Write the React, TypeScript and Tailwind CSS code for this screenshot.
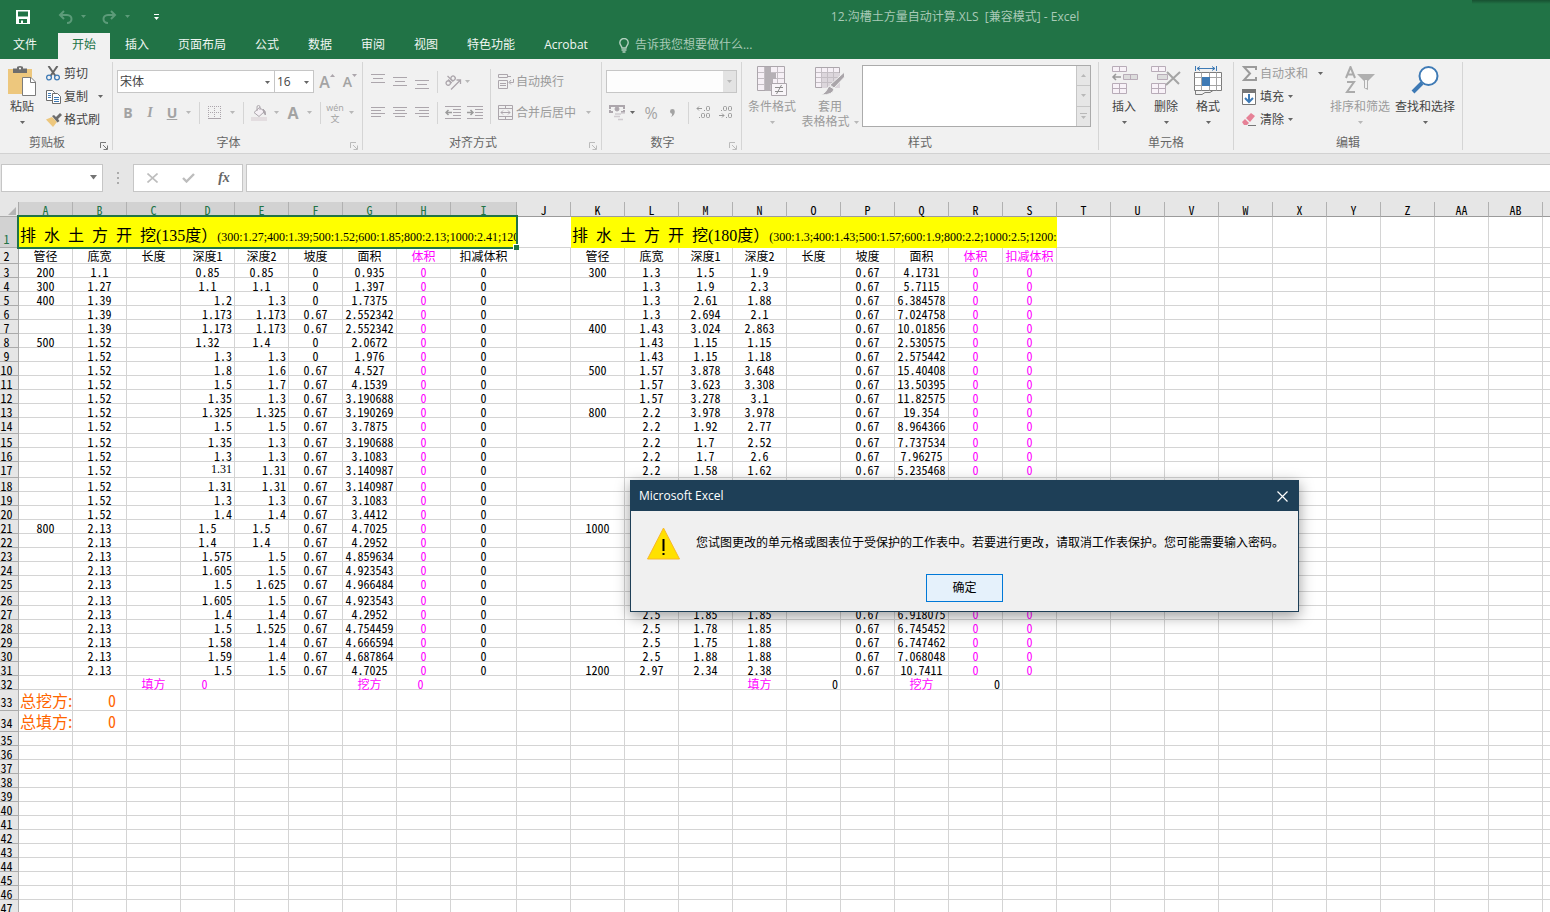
import React from 'react';

const INK = '#aca6ac';
const DARK = '#737373';
const BLUE = '#3e7ab5';

const Arrow: React.FC<{ color?: string; className?: string }> = ({ color = '#666666', className = '' }) => (
  <svg width="5" height="3" viewBox="0 0 5 3" className={`shrink-0 ${className}`}>
    <path d="M0 0h5L2.500 3z" fill={color} />
  </svg>
);

const Launcher: React.FC<{ color?: string }> = ({ color = '#777777' }) => (
  <svg width="8" height="8" viewBox="0 0 8 8" className="absolute right-1 bottom-0" fill="none" stroke={color}>
    <path d="M.5 6V.5H6M3 3l4 4M7.500 3.500v4h-4" />
  </svg>
);

const Divider = () => <span className="h-[22px] w-px shrink-0 bg-[#d5d5d5]" />;

const Group: React.FC<{
  label: string;
  width: string;
  launcher?: string;
  children: React.ReactNode;
}> = ({ label, width, launcher, children }) => (
  <section aria-label={label} className={`relative flex h-[88px] shrink-0 flex-col border-r border-[#d5d5d5] ${width}`}>
    <div className="flex h-[72px] shrink-0 items-start">{children}</div>
    <div className={`text-center leading-[18px] text-[#666666] ${launcher ? 'pr-[18px]' : ''}`}>{label}</div>
    {launcher && <Launcher color={launcher} />}
  </section>
);

const LargeButton: React.FC<{
  icon: React.ReactNode;
  label: string;
  second?: string;
  width: string;
  disabled?: boolean;
}> = ({ icon, label, second, width, disabled }) => (
  <button className={`flex shrink-0 flex-col items-center pt-1 leading-4 whitespace-nowrap ${width} ${disabled ? 'text-[#9b9b9b]' : 'text-[#444444]'}`}>
    <span className="flex h-[33px] items-start justify-center">{icon}</span>
    <span>{label}</span>
    <span className="flex h-[14px] items-center gap-1">
      {second}
      <Arrow color={disabled ? '#b8b8b8' : '#666666'} />
    </span>
  </button>
);

const SmallButton: React.FC<{
  icon: React.ReactNode;
  label: string;
  arrow?: boolean;
  wideArrow?: boolean;
  disabled?: boolean;
}> = ({ icon, label, arrow, wideArrow, disabled }) => (
  <button className={`flex h-[23px] items-center whitespace-nowrap ${disabled ? 'text-[#9b9b9b]' : 'text-[#444444]'}`}>
    <span className="flex w-[18px] shrink-0 items-center">{icon}</span>
    {label}
    {arrow && <Arrow className={wideArrow ? 'ml-[10px]' : 'ml-1'} />}
  </button>
);

const IconButton: React.FC<{ label: string; width?: string; children: React.ReactNode }> = ({
  label,
  width = 'w-[22px]',
  children,
}) => (
  <button aria-label={label} className={`flex h-[23px] shrink-0 items-center justify-center text-[#a3a3a3] ${width}`}>
    {children}
  </button>
);

/* ---------- icons ---------- */

const SaveIcon = () => (
  <svg width="14" height="14" viewBox="0 0 14 14">
    <path fill="#fff" fillRule="evenodd" d="M0 0h14v14H0zM2 1.500v5h10v-5zM3 9v4h2v-2.500h2V13h4V9z" />
  </svg>
);

const UndoIcon: React.FC<{ flip?: boolean }> = ({ flip }) => (
  <svg width="15" height="14" viewBox="0 0 15 14" fill="none" stroke="#5c9b79" strokeWidth="2">
    {flip ? (
      <path d="M9 1l4 4-4 4M13 5H6C3 5 1.500 7 1.500 9S3 13 6 13" />
    ) : (
      <path d="M6 1L2 5l4 4M2 5h7c3 0 4.500 2 4.500 4S12 13 9 13" />
    )}
  </svg>
);

const BulbIcon = () => (
  <svg width="10" height="15" viewBox="0 0 10 15" fill="none" stroke="#b3d0c0">
    <path strokeWidth="1.400" d="M3 10C3 8 .8 7 .8 4.700a4.200 4.200 0 018.400 0C9.200 7 7 8 7 10z" />
    <path strokeWidth="1.500" d="M2.500 12h5M3.500 14h3" />
  </svg>
);

const PasteIcon = () => (
  <svg width="28" height="30" viewBox="0 0 28 30">
    <path fill="#edc77d" d="M0 3h24v25H0z" />
    <path fill="#6d6d6d" d="M5 2.500h4V1.500Q9 0 12 0t3 1.500v1h4V7H5z" />
    <circle cx="12" cy="2.500" r="1" fill="#fff" />
    <path fill="#fff" stroke="#7c7c7c" d="M14.500 11.500H23l4.500 4.500v13.500h-13z" />
    <path fill="none" stroke="#7c7c7c" d="M22.500 11.500v5h5" />
  </svg>
);

const CutIcon = () => (
  <svg width="14" height="15" viewBox="0 0 14 15" fill="none">
    <path d="M2.500 0l7 10M11.500 0l-7 10" stroke="#666" strokeWidth="2" />
    <circle cx="3" cy="11.500" r="2.400" stroke={BLUE} strokeWidth="1.300" />
    <circle cx="11" cy="11.500" r="2.400" stroke={BLUE} strokeWidth="1.300" />
  </svg>
);

const CopyIcon = () => (
  <svg width="15" height="14" viewBox="0 0 15 14" fill="#fff" stroke="#6d6d6d">
    <path d="M.5.5h6l2 2v8h-8z" />
    <path stroke={BLUE} d="M2 3.500h3M2 5.500h3M2 7.500h3" />
    <path d="M6.500 3.500h5l3 3v7h-8z" />
    <path stroke={BLUE} d="M8 7.500h5M8 9.500h5M8 11.500h5" />
  </svg>
);

const BrushIcon = () => (
  <svg width="16" height="14" viewBox="0 0 16 14">
    <path fill="#edc77d" d="M0 6.500L6 4l5 5-4 5z" />
    <path fill="#6d6d6d" d="M6 3l2-1 2 2 4-4 2 2-4 4 1.500 2-2 1.500z" />
  </svg>
);

const BordersIcon = () => (
  <svg width="14" height="14" viewBox="0 0 14 14" fill="none" stroke={INK}>
    <path strokeDasharray="1 1" d="M.5 0v13M6.500 0v13M12.500 0v13M0 .5h13M0 6.500h13" />
    <path d="M0 12.500h13" />
  </svg>
);

const BucketIcon = () => (
  <svg width="16" height="16" viewBox="0 0 16 16" fill="none" stroke={INK}>
    <path fill="#e3dde0" stroke="none" d="M0 12h16v4H0z" />
    <path fill="#f5f0f5" d="M3 7.500L8.500 2.500l5 4L8 11.500z" />
    <path d="M6 6V2q0-1.500 1.500-1.500T9 2v3" />
    <path fill={INK} d="M12 4q3 2 2.500 6-2-1-2.500-6z" />
  </svg>
);

const LINES: Record<string, string> = {
  top: 'M0 .5h14M2 4.500h10M0 8.500h14',
  middle: 'M0 3.500h14M2 7.500h10M0 11.500h14',
  bottom: 'M0 6.500h14M2 10.500h10M0 14.500h14',
  left: 'M0 2.500h14M0 5.500h10M0 8.500h14M0 11.500h10',
  center: 'M0 2.500h14M2 5.500h10M0 8.500h14M2 11.500h10',
  right: 'M0 2.500h14M4 5.500h10M0 8.500h14M4 11.500h10',
};

const LinesIcon: React.FC<{ kind: string }> = ({ kind }) => (
  <svg width="14" height="15" viewBox="0 0 14 15" fill="none" stroke={INK}>
    <path d={LINES[kind]} />
  </svg>
);

const OrientIcon = () => (
  <svg width="17" height="16" viewBox="0 0 17 16" fill="none" stroke={INK} strokeWidth="1.300">
    <path d="M6 15.500L15.500 6M11.500 6h4v4" />
    <g transform="rotate(-45 5 8)">
      <circle cx="3" cy="7.500" r="2.200" />
      <path d="M5.500 5v5M7.500 2v8" />
      <circle cx="9.800" cy="7.500" r="2.200" />
    </g>
  </svg>
);

const IndentIcon: React.FC<{ more?: boolean }> = ({ more }) => (
  <svg width="16" height="13" viewBox="0 0 16 13" fill="none" stroke={INK}>
    <path d="M0 .5h16M8 3.500h8M8 6.500h8M8 9.500h8M0 12.500h16" />
    <path strokeWidth="1.500" stroke="#9b9b9b" d={more ? 'M0 6.500h6M3.500 4l2.500 2.500L3.500 9' : 'M7 6.500H1M3.500 4L1 6.500 3.500 9'} />
  </svg>
);

const WrapIcon = () => (
  <svg width="16" height="15" viewBox="0 0 16 15" fill="none" stroke={INK}>
    <path d="M.5.5h9v3h-9zM.5 6.500h9v8h-9zM2 9.500h6M2 11.500h6M9 2.500h4M15.500 5v3.500h-4M13 6l-2 2.500 2 2" />
  </svg>
);

const MergeIcon = () => (
  <svg width="15" height="15" viewBox="0 0 15 15" fill="none" stroke={INK}>
    <path d="M.5.5h14v14H.5zM.5 3.500h14M.5 11.500h14M7.500 0v3M7.500 12v3M3 7.500h9M5 5.500l-2 2 2 2M10 5.500l2 2-2 2" />
  </svg>
);

const MoneyIcon = () => (
  <svg width="16" height="16" viewBox="0 0 16 16" fill="none" stroke={INK}>
    <path strokeWidth="2" d="M1 4V1h3M12 1h3v3M15 5v2h-3M1 5v2h3M4 1h8" />
    <circle cx="8" cy="4" r="2" fill={INK} />
    <path strokeWidth="1.500" stroke="#d0cbd0" d="M6 9h6M5 11.500h6M9 14.500h5M12 8h4" />
  </svg>
);

const DecimalIcon: React.FC<{ up?: boolean }> = ({ up }) => (
  <svg width="16" height="15" viewBox="0 0 16 15" fill="none" stroke="#999">
    {up ? (
      <>
        <rect x="10.500" y="1.500" width="3" height="4" rx="1" />
        <rect x="5.500" y="8.500" width="3" height="4" rx="1" />
        <rect x="10.500" y="8.500" width="3" height="4" rx="1" />
        <path d="M6 3.500H1M3 1.500l-2 2 2 2M8 5.500h1M3 12.500h1" />
      </>
    ) : (
      <>
        <rect x="5.500" y="1.500" width="3" height="4" rx="1" />
        <rect x="10.500" y="1.500" width="3" height="4" rx="1" />
        <rect x="10.500" y="8.500" width="3" height="4" rx="1" />
        <path d="M1 10.500h5M4 8.500l2 2-2 2M3 5.500h1M8 12.500h1" />
      </>
    )}
  </svg>
);

const CondIcon = () => (
  <svg width="31" height="31" viewBox="0 0 31 31" stroke={INK} fill="#f6f0f6">
    <path d="M.5.5h27v24H.5z" />
    <path fill="none" stroke="#c4bec4" d="M1 6.500h26M1 12.500h26M1 18.500h26M7.500 1v23M13.500 1v23M20.500 1v23" />
    <path fill="#b5b0b5" stroke="none" d="M8 1h6v6H8zM8 7h11v6H8zM8 13h8v6H8zM8 19h5v6H8z" />
    <path fill="#f8f5f8" d="M14.500 17.500h15v12h-15z" />
    <path stroke="#8e8e8e" d="M18 21.500h8M18 25.500h8M24.500 19l-5 9" />
  </svg>
);

const TableIcon = () => (
  <svg width="30" height="30" viewBox="0 0 30 30" stroke={INK} fill="#f6f0f6">
    <path d="M.5 1.500h24v20H.5z" />
    <path fill="#dcd6dc" stroke="none" d="M7 7h18v15H7z" />
    <path fill="none" stroke="#c4bec4" d="M1 6.500h23M1 11.500h23M1 16.500h23M6.500 2v19M12.500 2v19M18.500 2v19" />
    <path fill="#aaa5aa" stroke="#f1f1f1" d="M29.500 6v5L19 22l-4-3zM14 20l5 3q-1 6-13 6 5-2 8-9z" />
  </svg>
);

const InsertIcon = () => (
  <svg width="27" height="28" viewBox="0 0 27 28" stroke="#b8acb8" fill="#f8f2f8">
    <path d="M1.500.5h14v5h-14zM8.500.5v5M1.500 17.500h14v10h-14zM8.500 17.500v10M1.500 22.500h14" />
    <path fill="#dcdcdc" d="M12.500 8.500h14v5h-14zM19.500 8.500v5" />
    <path fill="none" stroke="#999" strokeWidth="1.500" d="M10 11H2M5 8l-3 3 3 3" />
  </svg>
);

const DeleteIcon = () => (
  <svg width="30" height="29" viewBox="0 0 30 29" stroke="#b8acb8" fill="#f8f2f8">
    <path d="M.5.5h14v5H.5zM7.500.5v5M.5 17.500h14v10H.5zM7.500 17.500v10M.5 22.500h14" />
    <path fill="#dcdcdc" d="M6.500 8.500h10v5h-10z" />
    <path fill="none" stroke="#a5a5a5" strokeWidth="2" d="M16 6l12 12M29 6L15 19" />
  </svg>
);

const FormatIcon = () => (
  <svg width="29" height="31" viewBox="0 0 29 31" stroke="#7c7c7c" fill="#fff">
    <path stroke={BLUE} fill="none" d="M1.500 0v5M22.500 0v5M3 2.500h18M6 .5l-3 2 3 2M18 .5l3 2-3 2" />
    <path d="M.5 6.500h27v18H.5z" />
    <path fill="none" stroke="#a5a5a5" d="M.5 11.500h27M.5 19.500h27M7.500 6.500v18M15.500 6.500v18M22.500 6.500v18" />
    <path fill={BLUE} stroke="none" d="M8 11h8v9H8z" />
    <path d="M1.500 25v3.500H8l3-2h5l3-2" fill="none" />
  </svg>
);

const SigmaIcon = () => (
  <svg width="15" height="15" viewBox="0 0 15 15" fill="none" stroke="#9b9b9b" strokeWidth="2">
    <path d="M14 4V1H2l6 6.500L2 14h12v-3" />
  </svg>
);

const FillIcon = () => (
  <svg width="14" height="16" viewBox="0 0 14 16" fill="none">
    <path fill="#fff" stroke="#777" d="M.5.5h13v15H.5z" />
    <path fill="#777" d="M0 0h14v4H0z" />
    <path stroke={BLUE} strokeWidth="2" d="M7 5v8M3 9l4 4 4-4" />
  </svg>
);

const EraserIcon = () => (
  <svg width="14" height="13" viewBox="0 0 14 13">
    <path fill="#e68196" d="M4 5l5-5 4 3-5 6zM0 9l3-3 4 4-2 2H2z" />
    <path stroke="#777" d="M6 12.500h8" />
  </svg>
);

const SortIcon = () => (
  <svg width="30" height="29" viewBox="0 0 30 29" fill="none" stroke="#ababab" strokeWidth="2">
    <path d="M1 12L5.500 1 10 12M3 8.500h5M2 16h7L2 26h8" />
    <path fill="#b0b0b0" stroke="none" d="M12 8h18l-7 7v9l-4-2v-7z" />
    <path stroke="#f1f1f1" d="M21 14v8" />
  </svg>
);

const FindIcon = () => (
  <svg width="28" height="28" viewBox="0 0 28 28" fill="none" stroke={BLUE}>
    <path strokeWidth="4" d="M11 17L2 26" />
    <circle cx="17.500" cy="10" r="9" strokeWidth="2" fill="#fff" />
  </svg>
);

/* ---------- window chrome ---------- */

const TABS = ['插入', '页面布局', '公式', '数据', '审阅', '视图', '特色功能', 'Acrobat'];

const TitleBar = () => (
  <header className="relative bg-[#217346] text-[#f0f6f2]">
    <span className="absolute top-0 right-0 h-1 w-[78px] bg-linear-to-b from-black/30 to-transparent" />
    <div className="flex h-[33px] items-center">
      <div className="flex w-[163px] shrink-0 items-center pl-4">
        <button aria-label="保存"><SaveIcon /></button>
        <button aria-label="撤消" className="ml-7 flex items-center gap-2">
          <UndoIcon />
          <Arrow color="#5c9b79" />
        </button>
        <button aria-label="恢复" className="ml-4 flex items-center gap-2">
          <UndoIcon flip />
          <Arrow color="#5c9b79" />
        </button>
        <button aria-label="自定义快速访问工具栏" className="ml-6 flex flex-col items-center gap-[2px]">
          <span className="h-px w-[5px] bg-white" />
          <Arrow color="#ffffff" />
        </button>
      </div>
      <h1 className="flex-1 pl-[197px] text-center leading-4 whitespace-pre text-[#a9cab7]">
        {'12.沟槽土方量自动计算.XLS  [兼容模式] - Excel'}
      </h1>
    </div>
    <nav className="flex h-[26px] leading-6 whitespace-nowrap">
      <button className="w-[58px] shrink-0 self-start pl-[13px] text-left">文件</button>
      <div className="flex gap-px">
        <button className="flex items-start bg-[#f1f1f1] px-[14px] text-[#217346]">开始</button>
        {TABS.map((tab) => (
          <button key={tab} className="self-start px-[14px]">{tab}</button>
        ))}
      </div>
      <button className="flex items-center gap-[6px] self-start pl-[17px] text-[#a9cab7]">
        <BulbIcon />
        告诉我您想要做什么...
      </button>
    </nav>
  </header>
);

const Ribbon = () => (
  <div className="flex h-[95px] overflow-hidden border-b border-[#d2d2d2] bg-[#f1f1f1] pt-[3px]">
    <Group label="剪贴板" width="w-[113px]" launcher="#777777">
      <LargeButton width="w-11" icon={<PasteIcon />} label="粘贴" />
      <div className="flex flex-col pl-[2px]">
        <SmallButton icon={<CutIcon />} label="剪切" />
        <SmallButton icon={<CopyIcon />} label="复制" arrow wideArrow />
        <SmallButton icon={<BrushIcon />} label="格式刷" />
      </div>
    </Group>

    <Group label="字体" width="w-[250px]" launcher="#bbbbbb">
      <div className="flex flex-col gap-2 pt-2 pl-1">
        <div className="flex items-center">
          <div className="relative h-[23px] w-[158px] border border-[#c6c6c6] bg-white">
            <select aria-label="字体名称" className="h-full w-full appearance-none px-[2px] text-[#444444]">
              <option>宋体</option>
            </select>
            <Arrow className="absolute top-[10px] right-1" />
          </div>
          <div className="relative -ml-px h-[23px] w-10 border border-[#c6c6c6] bg-white">
            <select aria-label="字号" className="h-full w-full appearance-none px-[2px] text-[#444444]">
              <option>16</option>
            </select>
            <Arrow className="absolute top-[10px] right-1" />
          </div>
          <IconButton label="增大字号" width="w-[26px]">
            <span className="text-base font-semibold">A</span>
            <svg width="5" height="3" viewBox="0 0 5 3" className="mb-3"><path d="M0 3h5L2.500 0z" fill={INK} /></svg>
          </IconButton>
          <IconButton label="减小字号" width="w-5">
            <span className="text-sm font-semibold">A</span>
            <Arrow color={INK} className="mb-3" />
          </IconButton>
        </div>
        <div className="flex items-center">
          <IconButton label="加粗"><b className="text-sm">B</b></IconButton>
          <IconButton label="倾斜"><i className="font-['Liberation_Serif',serif] text-sm font-bold">I</i></IconButton>
          <IconButton label="下划线"><span className="text-sm font-bold underline">U</span></IconButton>
          <Arrow color="#b8b8b8" className="mr-2 ml-[3px]" />
          <Divider />
          <IconButton label="边框" width="w-[30px]"><BordersIcon /></IconButton>
          <Arrow color="#b8b8b8" className="mr-2" />
          <Divider />
          <IconButton label="填充颜色" width="w-[30px]"><BucketIcon /></IconButton>
          <Arrow color="#b8b8b8" />
          <IconButton label="字体颜色" width="w-7"><b className="text-base">A</b></IconButton>
          <Arrow color="#b8b8b8" className="mr-2" />
          <Divider />
          <IconButton label="拼音" width="w-7">
            <span className="flex flex-col items-center text-[9px] leading-[11px]">
              <span>wén</span>
              <span>文</span>
            </span>
          </IconButton>
          <Arrow color="#b8b8b8" />
        </div>
      </div>
    </Group>

    <Group label="对齐方式" width="w-[239px]" launcher="#bbbbbb">
      <div className="flex flex-col gap-2 pt-2 pl-1">
        <div className="flex items-center">
          <IconButton label="顶端对齐"><LinesIcon kind="top" /></IconButton>
          <IconButton label="垂直居中"><LinesIcon kind="middle" /></IconButton>
          <IconButton label="底端对齐"><LinesIcon kind="bottom" /></IconButton>
          <span className="w-1" />
          <Divider />
          <IconButton label="方向" width="w-[30px]"><OrientIcon /></IconButton>
          <Arrow color="#b8b8b8" className="-ml-[3px]" />
        </div>
        <div className="flex items-center">
          <IconButton label="左对齐"><LinesIcon kind="left" /></IconButton>
          <IconButton label="居中"><LinesIcon kind="center" /></IconButton>
          <IconButton label="右对齐"><LinesIcon kind="right" /></IconButton>
          <span className="w-1" />
          <Divider />
          <span className="w-1" />
          <IconButton label="减少缩进量"><IndentIcon /></IconButton>
          <IconButton label="增加缩进量"><IndentIcon more /></IconButton>
        </div>
      </div>
      <span className="mt-[7px] ml-1 h-[55px] w-px bg-[#d5d5d5]" />
      <div className="flex flex-col gap-2 pt-2 pl-[7px]">
        <SmallButton icon={<WrapIcon />} label="自动换行" disabled />
        <div className="flex items-center">
          <SmallButton icon={<MergeIcon />} label="合并后居中" disabled />
          <Arrow color="#b8b8b8" className="ml-[10px]" />
        </div>
      </div>
    </Group>

    <Group label="数字" width="w-[140px]" launcher="#bbbbbb">
      <div className="flex flex-col gap-2 pt-2 pl-1">
        <div className="relative h-[23px] w-[131px] border border-[#c6c6c6] bg-[#fdfdfd]">
          <select aria-label="数字格式" className="h-full w-full appearance-none" />
          <span className="absolute top-0 right-0 flex h-full w-[13px] items-center justify-center bg-[#e3e3e3]">
            <Arrow color="#b8b8b8" />
          </span>
        </div>
        <div className="flex items-center">
          <IconButton label="会计数字格式"><MoneyIcon /></IconButton>
          <Arrow className="ml-[2px]" />
          <IconButton label="百分比样式" width="w-8"><span className="text-base">%</span></IconButton>
          <IconButton label="千位分隔样式" width="w-[10px]">
            <svg width="5" height="8" viewBox="0 0 5 8"><path fill="#a3a3a3" d="M0 2.500a2.300 2.300 0 014.800 0Q4.800 6 1 8 2.500 6 2 4.800 0 4.500 0 2.500z" /></svg>
          </IconButton>
          <span className="w-[11px]" />
          <Divider />
          <span className="w-1" />
          <IconButton label="增加小数位数"><DecimalIcon up /></IconButton>
          <IconButton label="减少小数位数"><DecimalIcon /></IconButton>
        </div>
      </div>
    </Group>

    <Group label="样式" width="w-[357px]">
      <LargeButton width="w-[60px]" icon={<CondIcon />} label="条件格式" disabled />
      <LargeButton width="w-14" icon={<TableIcon />} label="套用" second="表格格式" disabled />
      <div className="mt-[3px] ml-1 flex h-[62px] w-[229px] border border-[#ababab] bg-white">
        <div className="flex-1" />
        <div className="flex w-[14px] flex-col divide-y divide-[#c6c6c6] border-l border-[#c6c6c6] bg-[#e6e6e6]">
          <button aria-label="上一行" className="flex flex-1 items-center justify-center">
            <svg width="5" height="3" viewBox="0 0 5 3"><path d="M0 3h5L2.500 0z" fill="#b8b8b8" /></svg>
          </button>
          <button aria-label="下一行" className="flex flex-1 items-center justify-center"><Arrow color="#b8b8b8" /></button>
          <button aria-label="其他" className="flex flex-1 flex-col items-center justify-center gap-[2px]">
            <span className="h-px w-[7px] bg-[#b8b8b8]" />
            <Arrow color="#b8b8b8" />
          </button>
        </div>
      </div>
    </Group>

    <Group label="单元格" width="w-[135px]">
      <span className="w-1" />
      <LargeButton width="w-[42px]" icon={<InsertIcon />} label="插入" />
      <LargeButton width="w-[42px]" icon={<DeleteIcon />} label="删除" />
      <LargeButton width="w-[42px]" icon={<FormatIcon />} label="格式" />
    </Group>

    <Group label="编辑" width="w-[229px]">
      <div className="flex w-[93px] flex-col pl-2">
        <SmallButton icon={<SigmaIcon />} label="自动求和" arrow wideArrow disabled />
        <SmallButton icon={<FillIcon />} label="填充" arrow />
        <SmallButton icon={<EraserIcon />} label="清除" arrow />
      </div>
      <LargeButton width="w-[66px]" icon={<SortIcon />} label="排序和筛选" disabled />
      <LargeButton width="w-16" icon={<FindIcon />} label="查找和选择" />
    </Group>
  </div>
);

const FormulaBar = () => (
  <div className="flex h-12 items-start bg-[#e6e6e6] pt-[10px] pl-px">
    <div className="relative h-7 w-[102px] border border-[#c6c6c6] bg-white">
      <input aria-label="名称框" className="h-full w-full px-1" />
      <svg width="7" height="5" viewBox="0 0 7 5" className="absolute top-[10px] right-[5px]"><path d="M0 0h7L3.500 4.500z" fill={DARK} /></svg>
    </div>
    <div className="flex h-7 w-[30px] flex-col items-center justify-center gap-[3px]">
      <span className="size-[2px] bg-[#ababab]" />
      <span className="size-[2px] bg-[#ababab]" />
      <span className="size-[2px] bg-[#ababab]" />
    </div>
    <div className="flex h-7 w-[110px] items-center border border-[#c6c6c6] bg-white">
      <button aria-label="取消" className="flex w-9 justify-center">
        <svg width="11" height="10" viewBox="0 0 11 10" fill="none" stroke="#bdbdbd" strokeWidth="1.600"><path d="M.5.5l10 9M10.500.5l-10 9" /></svg>
      </button>
      <button aria-label="输入" className="flex w-9 justify-center">
        <svg width="13" height="10" viewBox="0 0 13 10" fill="none" stroke="#bdbdbd" strokeWidth="2.400"><path d="M1 5l3.500 3.500L12 1" /></svg>
      </button>
      <button aria-label="插入函数" className="flex w-9 justify-center font-['Liberation_Serif',serif] text-sm font-bold text-[#666666] italic">
        fx
      </button>
    </div>
    <input aria-label="编辑栏" className="ml-[3px] h-7 min-w-0 flex-1 border border-r-0 border-[#c6c6c6] bg-white px-1" />
  </div>
);

/* ---------- sheet ---------- */

const COLUMNS = [
  'A', 'B', 'C', 'D', 'E', 'F', 'G', 'H', 'I', 'J', 'K', 'L', 'M', 'N', 'O',
  'P', 'Q', 'R', 'S', 'T', 'U', 'V', 'W', 'X', 'Y', 'Z', 'AA', 'AB', '',
];

// pipe diameter, width, depth 1, depth 2, slope, area
const LEFT_ROWS: string[][] = [
  ['200', '1.1', '0.85', '0.85', '0', '0.935'],
  ['300', '1.27', '1.1', '1.1', '0', '1.397'],
  ['400', '1.39', '1.2', '1.3', '0', '1.7375'],
  ['', '1.39', '1.173', '1.173', '0.67', '2.552342'],
  ['', '1.39', '1.173', '1.173', '0.67', '2.552342'],
  ['500', '1.52', '1.32', '1.4', '0', '2.0672'],
  ['', '1.52', '1.3', '1.3', '0', '1.976'],
  ['', '1.52', '1.8', '1.6', '0.67', '4.527'],
  ['', '1.52', '1.5', '1.7', '0.67', '4.1539'],
  ['', '1.52', '1.35', '1.3', '0.67', '3.190688'],
  ['', '1.52', '1.325', '1.325', '0.67', '3.190269'],
  ['', '1.52', '1.5', '1.5', '0.67', '3.7875'],
  ['', '1.52', '1.35', '1.3', '0.67', '3.190688'],
  ['', '1.52', '1.3', '1.3', '0.67', '3.1083'],
  ['', '1.52', '1.31', '1.31', '0.67', '3.140987'],
  ['', '1.52', '1.31', '1.31', '0.67', '3.140987'],
  ['', '1.52', '1.3', '1.3', '0.67', '3.1083'],
  ['', '1.52', '1.4', '1.4', '0.67', '3.4412'],
  ['800', '2.13', '1.5', '1.5', '0.67', '4.7025'],
  ['', '2.13', '1.4', '1.4', '0.67', '4.2952'],
  ['', '2.13', '1.575', '1.5', '0.67', '4.859634'],
  ['', '2.13', '1.605', '1.5', '0.67', '4.923543'],
  ['', '2.13', '1.5', '1.625', '0.67', '4.966484'],
  ['', '2.13', '1.605', '1.5', '0.67', '4.923543'],
  ['', '2.13', '1.4', '1.4', '0.67', '4.2952'],
  ['', '2.13', '1.5', '1.525', '0.67', '4.754459'],
  ['', '2.13', '1.58', '1.4', '0.67', '4.666594'],
  ['', '2.13', '1.59', '1.4', '0.67', '4.687864'],
  ['', '2.13', '1.5', '1.5', '0.67', '4.7025'],
];

const RIGHT_ROWS: Record<number, string[]> = {
  3: ['300', '1.3', '1.5', '1.9', '4.1731'],
  4: ['', '1.3', '1.9', '2.3', '5.7115'],
  5: ['', '1.3', '2.61', '1.88', '6.384578'],
  6: ['', '1.3', '2.694', '2.1', '7.024758'],
  7: ['400', '1.43', '3.024', '2.863', '10.01856'],
  8: ['', '1.43', '1.15', '1.15', '2.530575'],
  9: ['', '1.43', '1.15', '1.18', '2.575442'],
  10: ['500', '1.57', '3.878', '3.648', '15.40408'],
  11: ['', '1.57', '3.623', '3.308', '13.50395'],
  12: ['', '1.57', '3.278', '3.1', '11.82575'],
  13: ['800', '2.2', '3.978', '3.978', '19.354'],
  14: ['', '2.2', '1.92', '2.77', '8.964366'],
  15: ['', '2.2', '1.7', '2.52', '7.737534'],
  16: ['', '2.2', '1.7', '2.6', '7.96275'],
  17: ['', '2.2', '1.58', '1.62', '5.235468'],
  27: ['', '2.5', '1.85', '1.85', '6.918075'],
  28: ['', '2.5', '1.78', '1.85', '6.745452'],
  29: ['', '2.5', '1.75', '1.88', '6.747462'],
  30: ['', '2.5', '1.88', '1.88', '7.068048'],
  31: ['1200', '2.97', '2.34', '2.38', '10.7411'],
};

const CELLS: Record<string, string> = {
  A2: '管径', B2: '底宽', C2: '长度', D2: '深度1', E2: '深度2', F2: '坡度', G2: '面积', H2: '体积', I2: '扣减体积',
  K2: '管径', L2: '底宽', M2: '深度1', N2: '深度2', O2: '长度', P2: '坡度', Q2: '面积', R2: '体积', S2: '扣减体积',
  K21: '1000',
  C32: '填方', D32: '0', G32: '挖方', H32: '0', N32: '填方', O32: '0', Q32: '挖方', R32: '0',
  A33: '总挖方:', B33: '0', A34: '总填方:', B34: '0',
};

LEFT_ROWS.forEach((values, i) => {
  ['A', 'B', 'D', 'E', 'F', 'G'].forEach((col, j) => {
    CELLS[`${col}${i + 3}`] = values[j];
  });
  CELLS[`H${i + 3}`] = '0';
  CELLS[`I${i + 3}`] = '0';
});

Object.entries(RIGHT_ROWS).forEach(([row, values]) => {
  ['K', 'L', 'M', 'N', 'Q'].forEach((col, j) => {
    CELLS[`${col}${row}`] = values[j];
  });
  CELLS[`P${row}`] = '0.67';
  CELLS[`R${row}`] = '0';
  CELLS[`S${row}`] = '0';
});

const CENTERED_DEPTH_ROWS = [2, 3, 4, 8, 21, 22];
const TALL_ROWS = [2, 14, 17, 25];

const rowHeight = (row: number) => {
  if (row === 33 || row === 34) return 'h-[21px]';
  return TALL_ROWS.includes(row) ? 'h-4' : 'h-[14px]';
};

const rowAlign = (row: number) => (TALL_ROWS.includes(row) ? 'align-middle' : 'align-bottom');

const cellStyle = (col: string, row: number) => {
  if (row === 33 || row === 34) {
    return col === 'A'
      ? 'pl-px text-left text-base leading-5 text-[#ff6600] [font-feature-settings:normal]'
      : 'pr-[10px] text-right text-base leading-5 text-[#ff6600]';
  }
  if (row === 32) {
    if (col === 'O' || col === 'R') return 'pr-[2px] text-right';
    return col === 'D' || col === 'H' ? 'pr-[6px] text-center text-[#ff00ff]' : 'text-center text-[#ff00ff]';
  }
  if (col === 'H' || col === 'R' || col === 'S') return 'text-center text-[#ff00ff]';
  if (col === 'D' && row === 17) return "pr-[2px] text-right font-['Liberation_Serif',serif]";
  if ((col === 'D' || col === 'E') && !CENTERED_DEPTH_ROWS.includes(row)) return 'pr-[2px] text-right';
  return 'text-center';
};

const SheetTitle: React.FC<{ angle: string; ratios: string }> = ({ angle, ratios }) => (
  <div className="overflow-hidden pl-px text-left text-base leading-6 whitespace-nowrap">
    排 水 土 方 开 挖
    <span className="font-['Liberation_Serif','Noto_Sans_CJK_SC',serif] [font-feature-settings:normal]">({angle}度）</span>
    <span className="font-['Liberation_Serif',serif] text-xs">{ratios}</span>
  </div>
);

const Sheet = () => (
  <div className="flex-1 overflow-hidden bg-white font-['Noto_Sans_CJK_SC',sans-serif] leading-[11px] text-black [font-feature-settings:'hwid']">
    <table className="w-[1597px] table-fixed border-separate border-spacing-0">
      <colgroup>
        <col className="w-[19px]" />
        {COLUMNS.map((col) => (
          <col key={col} className={col === 'I' ? 'w-[66px]' : 'w-[54px]'} />
        ))}
      </colgroup>
      <thead>
        <tr className="h-[15px]">
          <th aria-label="全选" className="border-r border-b border-[#ababab] bg-[#e6e6e6] p-0">
            <svg width="8" height="8" viewBox="0 0 8 8" className="mt-1 ml-2"><path d="M8 0v8H0z" fill="#b4b4b4" /></svg>
          </th>
          {COLUMNS.map((col, i) => (
            <th
              key={col}
              scope="col"
              className={`border-r border-b border-r-[#b1b1b1] border-b-[#9b9b9b] p-0 font-normal ${
                i < 9 ? 'bg-[#d2d2d2] text-[#217346]' : 'bg-[#e6e6e6]'
              }`}
            >
              {col}
            </th>
          ))}
        </tr>
      </thead>
      <tbody>
        <tr className="h-[31px]">
          <th scope="row" className="border-r border-b border-[#ababab] bg-[#d2d2d2] p-0 pr-[5px] pb-[3px] align-bottom font-normal text-[#217346]">
            1
          </th>
          <td colSpan={9} className="relative bg-[#ffff00] p-0 align-bottom">
            <SheetTitle angle="135" ratios="(300:1.27;400:1.39;500:1.52;600:1.85;800:2.13;1000:2.41;120" />
            <div className="absolute -top-[2px] -right-px -bottom-px -left-[2px] border-2 border-[#217346]">
              <span className="absolute -right-[3px] -bottom-[3px] size-[6px] border-t border-l border-white bg-[#217346]" />
            </div>
          </td>
          <td className="border-b border-[#d4d4d4] p-0" />
          <td colSpan={9} className="bg-[#ffff00] p-0 align-bottom">
            <SheetTitle angle="180" ratios="(300:1.3;400:1.43;500:1.57;600:1.9;800:2.2;1000:2.5;1200:2" />
          </td>
          {COLUMNS.slice(19).map((col) => (
            <td key={col} className="border-r border-b border-[#d4d4d4] p-0" />
          ))}
        </tr>
        {Array.from({ length: 46 }, (_, i) => i + 2).map((row) => (
          <tr key={row} className={rowHeight(row)}>
            <th
              scope="row"
              className={`border-r border-b border-[#ababab] bg-[#e6e6e6] p-0 pr-[5px] font-normal ${rowAlign(row)} ${
                row === 33 || row === 34 ? 'pb-[3px]' : ''
              }`}
            >
              {row}
            </th>
            {COLUMNS.map((col) => (
              <td
                key={col}
                className={`border-r border-b border-[#d4d4d4] p-0 whitespace-nowrap ${rowAlign(row)} ${
                  CELLS[`${col}${row}`] ? cellStyle(col, row) : ''
                }`}
              >
                {CELLS[`${col}${row}`]}
              </td>
            ))}
          </tr>
        ))}
      </tbody>
    </table>
  </div>
);

const AlertDialog = () => (
  <div
    role="alertdialog"
    aria-label="Microsoft Excel"
    className="absolute top-[480px] left-[630px] w-[669px] border border-[#1e3f57] bg-[#f0f0f0] text-black shadow-[0_4px_14px_rgba(0,0,0,0.4)]"
  >
    <div className="flex h-[30px] items-center justify-between bg-[#1e3f57] pr-[10px] pl-2 text-white">
      <span>Microsoft Excel</span>
      <button aria-label="关闭">
        <svg width="11" height="11" viewBox="0 0 11 11" fill="none" stroke="#fff" strokeWidth="1.200"><path d="M.5.5l10 10M10.500.5l-10 10" /></svg>
      </button>
    </div>
    <div className="flex h-[63px] items-center gap-4 pt-px pl-4">
      <svg width="33" height="33" viewBox="0 0 33 33" className="shrink-0">
        <path d="M16.500 1L32.500 32H.5z" fill="#ffe100" stroke="#f8b72a" />
        <path d="M15.500 12h2v12h-2zM15.500 26h2v2h-2z" fill="#000" />
      </svg>
      <p className="whitespace-nowrap">您试图更改的单元格或图表位于受保护的工作表中。若要进行更改，请取消工作表保护。您可能需要输入密码。</p>
    </div>
    <div className="flex h-[37px] justify-center">
      <button className="h-7 w-[77px] border border-[#0078d7] bg-[#e5f1fb]">确定</button>
    </div>
  </div>
);

const App: React.FC = () => (
  <div className="relative flex h-screen flex-col overflow-hidden bg-[#e6e6e6] font-['Open_Sans','Noto_Sans_CJK_SC',sans-serif] text-xs">
    <TitleBar />
    <Ribbon />
    <FormulaBar />
    <Sheet />
    <AlertDialog />
  </div>
);

export default App;
